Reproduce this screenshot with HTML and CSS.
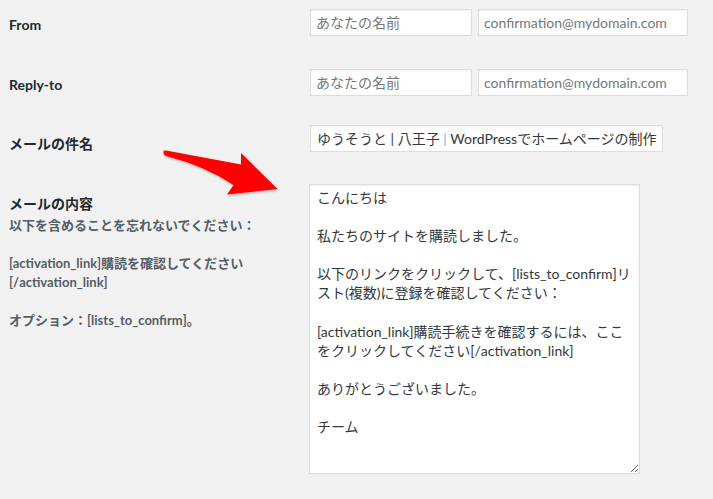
FILE: index.html
```html
<!DOCTYPE html>
<html lang="ja">
<head>
<meta charset="utf-8">
<title>メール設定</title>
<link rel="stylesheet" href="styles.css">
</head>
<body>
<div class="form">
  <div class="row row-from">
    <div class="th">From</div>
    <div class="td">
      <input class="input input-name" type="text" placeholder="あなたの名前">
      <input class="input input-email" type="text" placeholder="confirmation@mydomain.com">
    </div>
  </div>
  <div class="row row-reply">
    <div class="th">Reply-to</div>
    <div class="td">
      <input class="input input-name" type="text" placeholder="あなたの名前">
      <input class="input input-email" type="text" placeholder="confirmation@mydomain.com">
    </div>
  </div>
  <div class="row row-subject">
    <div class="th th-ja">メールの件名</div>
    <div class="td">
      <div class="input input-subject">ゆうそうと | 八王子 <span class="bar">|</span> WordPressでホームページの制作</div>
    </div>
  </div>
  <div class="row row-body">
    <div class="th th-ja">
      <div class="th-title">メールの内容</div>
      <div class="desc">
        <p>以下を含めることを忘れないでください：</p>
        <p>[activation_link]購読を確認してください[/activation_link]</p>
        <p>オプション：[lists_to_confirm]。</p>
      </div>
    </div>
    <div class="td">
      <textarea class="textarea">こんにちは

私たちのサイトを購読しました。

以下のリンクをクリックして、[lists_to_confirm]リ
スト(複数)に登録を確認してください：

[activation_link]購読手続きを確認するには、ここ
をクリックしてください[/activation_link]

ありがとうございました。

チーム</textarea>
    </div>
  </div>
</div>
<svg class="arrow" width="713" height="499" viewBox="0 0 713 499">
  <defs>
    <filter id="sh" x="-20%" y="-20%" width="140%" height="140%">
      <feDropShadow dx="1" dy="1.5" stdDeviation="1.2" flood-color="#000" flood-opacity="0.25"/>
    </filter>
  </defs>
  <path d="M163.5 152 Q163 150 166 150.5 L241 164.5 L241 153 L277.5 189 L227 194.5 L233.5 185 Q205 166 166 156 Q163 155 163.5 152 Z" fill="#ff0000" filter="url(#sh)"/>
</svg>
</body>
</html>
```
FILE: styles.css
```css
html, body {
  margin: 0;
  padding: 0;
}
body {
  background: #f1f1f1;
  font-family: Lato, "Noto Sans CJK JP", sans-serif;
  color: #23282d;
  width: 713px;
  height: 499px;
  overflow: hidden;
  position: relative;
}
.form {
  padding: 9px 0 0 9px;
}
.row {
  display: grid;
  grid-template-columns: 301px auto;
  align-items: start;
}
.row-from { height: 27px; margin-bottom: 33px; }
.row-reply { height: 27px; margin-bottom: 29px; }
.row-subject { height: 27px; margin-bottom: 32px; }
.th {
  font-size: 14px;
  font-weight: 700;
  line-height: 18px;
  padding-top: 7px;
}
.th-ja { padding-top: 10px; }
.row-body .th { padding-top: 11px; }
.desc {
  margin-top: 3px;
  font-size: 13px;
  line-height: 19px;
  color: #555d66;
  font-weight: 700;
  padding-right: 10px;
}
.desc p {
  margin: 0 0 19px;
}
.td {
  display: flex;
  gap: 6px;
  align-items: flex-start;
}
.input {
  box-sizing: border-box;
  height: 27px;
  border: 1px solid #dddddd;
  background: #fff;
  box-shadow: inset 0 1px 2px rgba(0,0,0,0.07);
  padding: 0 5px;
  margin: 0;
  font-family: Lato, "Noto Sans CJK JP", sans-serif;
  font-size: 14px;
  color: #32373c;
  outline: none;
}
.input::placeholder {
  color: #72777c;
}
.input-name { width: 162px; }
.input-email { width: 210px; }
.input-subject {
  width: 353px;
  line-height: 25px;
  white-space: nowrap;
  overflow: hidden;
  padding-left: 6px;
}
.bar { color: #7fb2de; }
.textarea {
  display: block;
  box-sizing: border-box;
  width: 331px;
  height: 290px;
  margin: 0 0 0 -1px;
  border: 1px solid #dddddd;
  background: #fff;
  box-shadow: inset 0 1px 2px rgba(0,0,0,0.07);
  padding: 3px 7px;
  font-family: Lato, "Noto Sans CJK JP", sans-serif;
  font-size: 14px;
  line-height: 19.1px;
  color: #32373c;
  white-space: pre;
  overflow: hidden;
  resize: vertical;
  outline: none;
}
.arrow {
  position: absolute;
  left: 0;
  top: 0;
  pointer-events: none;
}
```
